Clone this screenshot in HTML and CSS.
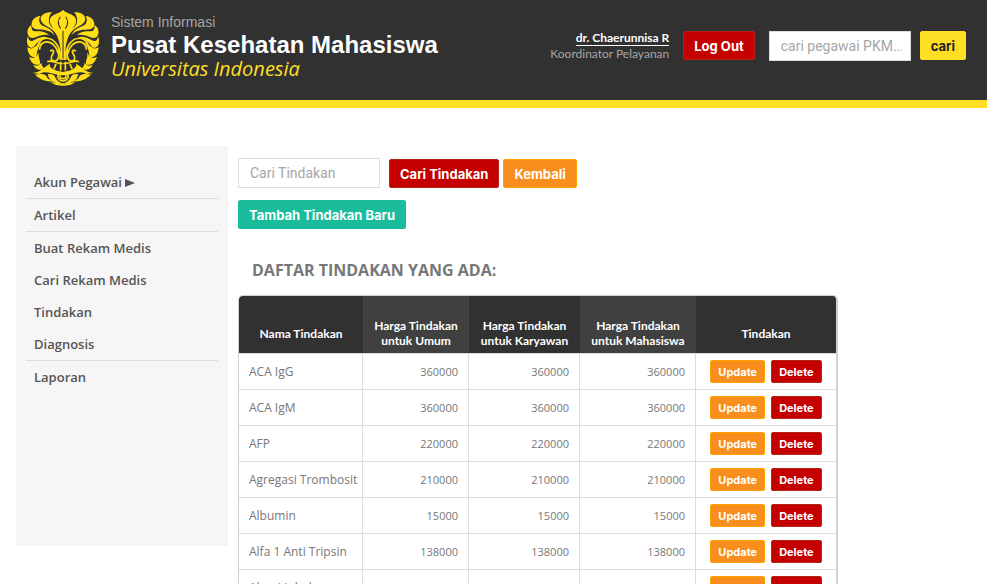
FILE: index.html
```html
<!DOCTYPE html>
<html lang="id">
<head>
<meta charset="utf-8">
<title>Pusat Kesehatan Mahasiswa</title>
<link rel="stylesheet" href="styles.css">
</head>
<body>
<header class="header">
  <div class="brand">
    <svg class="logo" viewBox="24 30 214 226" role="img" aria-label="Universitas Indonesia">
      <defs>
        <g id="half">
          <path d="M131 30C120 42 90 42 92 64C95 84 119 96 124 150L120 178H132V30Z"/>
          <path d="M98 37C76 34 62 48 65 60C73 82 98 76 116 110C112 86 89 82 89 62C89 50 92 44 98 37Z"/>
          <path d="M64 48C44 49 34 66 39 79C50 97 82 78 106 105C96 79 69 81 63 70C58 61 60 54 64 48Z"/>
          <path d="M38 74C23 84 22 100 31 110C46 121 60 98 90 105C72 86 47 97 40 90C37 85 36 80 38 74Z"/>
          <path d="M27 107C20 126 25 141 38 143C53 138 52 117 86 112C62 103 47 125 35 122C29 119 28 114 27 107Z"/>
          <path d="M25 140C26 161 36 171 49 171C58 160 49 146 68 126C50 132 42 153 25 140Z"/>
          <path d="M30 169C36 188 47 196 62 192C65 180 56 172 59 156C51 174 42 176 30 169Z"/>
          <path d="M42 193C50 208 62 212 76 204C69 199 67 193 67 187C60 196 52 198 42 193Z"/>
          <path class="line" d="M124 178C124 140 106 113 80 114C64 116 54 130 54 148M117 160C112 138 98 124 80 125C68 127 62 138 61 148"/>
          <path class="line" d="M93 153C99 146 106 151 101 160C94 170 94 181 106 182C118 182 119 170 119 145M84 184C98 176 106 190 130 189M112 186L104 205M124 184V210"/>
          <path d="M40 217C66 216 76 198 92 190C88 201 104 211 131 214V224C104 225 84 207 62 220Z"/>
          <path d="M48 222C62 220 72 218 82 226C84 236 94 238 103 242C82 244 62 238 48 222Z"/>
          <path d="M86 221C96 218 107 222 108 231C111 239 117 243 126 247C105 249 88 239 86 221Z"/>
          <path d="M112 226C112 250 124 248 131 248V255C113 256 100 250 94 242C109 250 117 246 112 226Z"/>
          <path class="line" d="M117 218C113 234 121 241 131 241M123 224C120 232 125 234 131 234"/>
        </g>
      </defs>
      <use href="#half"/>
      <use href="#half" transform="matrix(-1 0 0 1 262 0)"/>
      <path class="slit" d="M123 50C114 62 116 74 124 86M139 50C148 62 146 74 138 86M131 92V174"/>
    </svg>
    <div class="brand-text">
      <span class="brand-system">Sistem Informasi</span>
      <span class="brand-name">Pusat Kesehatan Mahasiswa</span>
      <span class="brand-university">Universitas Indonesia</span>
    </div>
  </div>
  <div class="account">
    <div class="user">
      <a class="user-name" href="#">dr. Chaerunnisa R</a>
      <span class="user-role">Koordinator Pelayanan</span>
    </div>
    <button class="btn btn-red" type="button">Log Out</button>
    <form class="search">
      <input class="field" type="text" aria-label="Cari pegawai PKM" placeholder="cari pegawai PKM...">
      <button class="btn btn-yellow" type="button">cari</button>
    </form>
  </div>
</header>
<div class="page">
  <nav class="sidebar">
    <ul class="menu">
      <li class="ruled"><a href="#">Akun Pegawai <svg class="arrow" viewBox="0 0 10 8" aria-hidden="true"><path d="M0 0L10 4L0 8Z"/></svg></a></li>
      <li class="ruled"><a href="#">Artikel</a></li>
      <li><a href="#">Buat Rekam Medis</a></li>
      <li><a href="#">Cari Rekam Medis</a></li>
      <li><a href="#">Tindakan</a></li>
      <li class="ruled"><a href="#">Diagnosis</a></li>
      <li><a href="#">Laporan</a></li>
    </ul>
  </nav>
  <main class="content">
    <form class="toolbar">
      <input class="field" type="text" aria-label="Cari Tindakan" placeholder="Cari Tindakan">
      <div class="actions">
        <button class="btn btn-red" type="button">Cari Tindakan</button>
        <button class="btn btn-orange" type="button">Kembali</button>
      </div>
    </form>
    <button class="btn btn-green" type="button">Tambah Tindakan Baru</button>
    <h1 class="title">DAFTAR TINDAKAN YANG ADA:</h1>
    <div class="table-frame">
    <table class="table">
      <colgroup><col class="col-name"><col class="col-umum"><col class="col-karyawan"><col class="col-mahasiswa"><col class="col-action"></colgroup>
      <thead>
        <tr><th>Nama Tindakan</th><th>Harga Tindakan<br>untuk Umum</th><th>Harga Tindakan<br>untuk Karyawan</th><th>Harga Tindakan<br>untuk Mahasiswa</th><th>Tindakan</th></tr>
      </thead>
      <tbody>
        <tr><td>ACA IgG</td><td>360000</td><td>360000</td><td>360000</td><td><div class="row-actions"><button class="btn btn-small btn-orange" type="button">Update</button><button class="btn btn-small btn-red" type="button">Delete</button></div></td></tr>
        <tr><td>ACA IgM</td><td>360000</td><td>360000</td><td>360000</td><td><div class="row-actions"><button class="btn btn-small btn-orange" type="button">Update</button><button class="btn btn-small btn-red" type="button">Delete</button></div></td></tr>
        <tr><td>AFP</td><td>220000</td><td>220000</td><td>220000</td><td><div class="row-actions"><button class="btn btn-small btn-orange" type="button">Update</button><button class="btn btn-small btn-red" type="button">Delete</button></div></td></tr>
        <tr><td>Agregasi Trombosit</td><td>210000</td><td>210000</td><td>210000</td><td><div class="row-actions"><button class="btn btn-small btn-orange" type="button">Update</button><button class="btn btn-small btn-red" type="button">Delete</button></div></td></tr>
        <tr><td>Albumin</td><td>15000</td><td>15000</td><td>15000</td><td><div class="row-actions"><button class="btn btn-small btn-orange" type="button">Update</button><button class="btn btn-small btn-red" type="button">Delete</button></div></td></tr>
        <tr><td>Alfa 1 Anti Tripsin</td><td>138000</td><td>138000</td><td>138000</td><td><div class="row-actions"><button class="btn btn-small btn-orange" type="button">Update</button><button class="btn btn-small btn-red" type="button">Delete</button></div></td></tr>
        <tr><td>Alergi Inhalan</td><td>360000</td><td>360000</td><td>360000</td><td><div class="row-actions"><button class="btn btn-small btn-orange" type="button">Update</button><button class="btn btn-small btn-red" type="button">Delete</button></div></td></tr>
      </tbody>
    </table>
    </div>
  </main>
</div>
</body>
</html>
```
FILE: styles.css
```css
* { box-sizing: border-box; }

html { height: 100%; overflow: hidden; }

body {
  height: 100%;
  margin: 0;
  overflow: hidden;
  background: #fff;
  color: #777;
  font-family: "Open Sans", sans-serif;
  font-size: 12px;
}

.header {
  display: flex;
  justify-content: space-between;
  align-items: flex-start;
  height: 108px;
  padding: 10px 21px 0 27px;
  background: #313131;
  border-bottom: 8px solid #ffde26;
}

.brand { display: flex; gap: 12px; }
.logo { width: 72px; height: 76px; fill: #ffde16; }
.logo .line { fill: none; stroke: #ffde16; stroke-width: 5; }
.logo .slit { fill: none; stroke: #313131; stroke-width: 3; }

.brand-text { display: flex; flex-direction: column; padding-top: 2px; white-space: nowrap; }
.brand-system { color: #a6a6a6; font: 14px/20px "Liberation Sans", sans-serif; }
.brand-name { color: #fff; font: bold 24px/26px "Liberation Sans", sans-serif; }
.brand-university { color: #ffde26; font: italic 20px/22px "Open Sans", sans-serif; }

.account { display: flex; align-items: center; gap: 14px; padding-top: 20px; }
.user { display: flex; flex-direction: column; align-items: flex-end; font-family: Lato, sans-serif; line-height: 15px; white-space: nowrap; }
.user-name { color: #fff; font-weight: 700; line-height: 15px; text-decoration: none; border-bottom: 1px solid #fff; }
.user-role { color: #a6a6a6; }
.search { display: flex; align-items: center; gap: 9px; }

.field {
  width: 142px;
  height: 30px;
  padding: 0 8px 0 11px;
  border: 1px solid #ddd;
  background: #fff;
  color: #555;
  font: 14px Roboto, sans-serif;
}
.field::placeholder { color: #a6a6a6; opacity: 1; }

.btn {
  height: 29px;
  padding: 0 10px;
  border: 1px solid;
  border-radius: 2px;
  color: #fff;
  font: bold 13px Inter, sans-serif;
  white-space: nowrap;
}
.btn-red { background: #c40000; border-color: #b32417; }
.btn-orange { background: #f78e1e; border-color: #ffa200; }
.btn-green { background: #1abc9c; border-color: #1abc9c; }
.btn-yellow { background: #ffde26; border-color: #ffde26; color: #222; }
.btn-small { height: 23px; padding: 0 7px; font-size: 11px; }

.page { display: flex; align-items: flex-start; gap: 10px; padding: 38px 16px 0; }

.sidebar { flex: 0 0 212px; min-height: 400px; padding: 20px 10px; background: #f6f6f6; }
.menu { margin: 0; padding: 0; list-style: none; }
.menu a {
  display: block;
  padding: 0 8px;
  color: #555;
  font-size: 13px;
  font-weight: 600;
  line-height: 32px;
  text-decoration: none;
}
.ruled { border-bottom: 1px solid #ddd; }
.arrow { width: 10px; height: 8px; fill: #555; }

.content { flex: 1; max-width: 600px; padding-top: 12px; }
.toolbar { display: flex; align-items: flex-end; gap: 9px; margin-bottom: 12px; }
.actions { display: flex; gap: 4px; }
.title { margin: 30px 14px 14px; font-size: 16px; font-weight: 700; line-height: 22px; }

.table-frame { overflow: hidden; border: 1px solid #d0d0d0; border-right-width: 2px; border-radius: 5px; }
.table { width: 100%; table-layout: fixed; border-collapse: separate; border-spacing: 0; }
.col-name { width: 124px; }
.col-umum { width: 106px; }
.col-karyawan { width: 111px; }
.col-mahasiswa { width: 116px; }
.table th {
  height: 58px;
  padding: 17px 0 0;
  background: #313131;
  border-bottom: 1px solid #ddd;
  color: #fff;
  font-family: Lato, sans-serif;
  font-weight: 700;
  line-height: 15px;
}
.table th:nth-child(even) { background: #404040; }
.table td { height: 36px; padding: 0 10px; border-right: 1px solid #ddd; border-bottom: 1px solid #ddd; font-size: 11px; text-align: right; }
.table td:first-child { padding-right: 0; font-size: 12px; text-align: left; white-space: nowrap; }
.table td:last-child { padding: 0; border-right: 0; }
.row-actions { display: flex; justify-content: center; gap: 6px; }
```
